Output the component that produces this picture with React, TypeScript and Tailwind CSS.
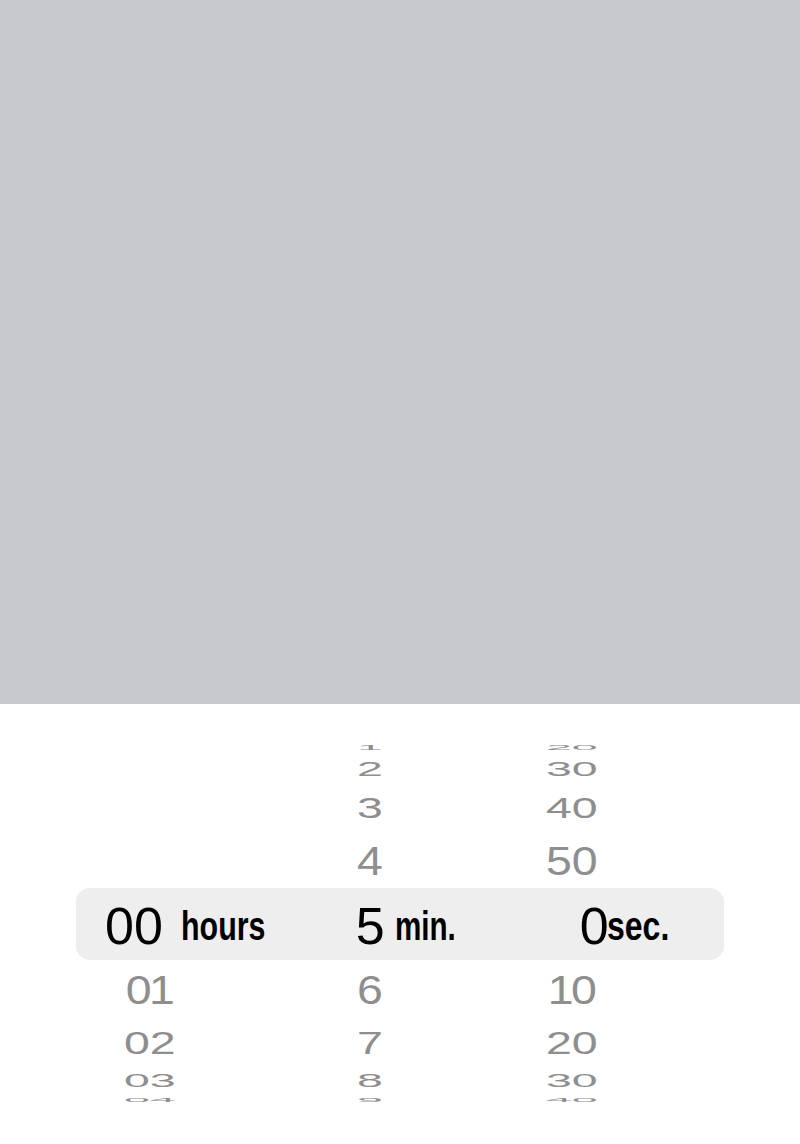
const font = "font-['Liberation_Sans',Arial,sans-serif]";

type WheelRow = { h: string; s: string; v: [string, string, string] };

const above: WheelRow[] = [
  { h: "h-[16px]", s: "scale-y-[0.14]", v: ["", "1", "20"] },
  { h: "h-[26px]", s: "scale-y-[0.39]", v: ["", "2", "30"] },
  { h: "h-[52px]", s: "scale-y-[0.6]", v: ["", "3", "40"] },
  { h: "h-[54px]", s: "scale-y-[0.83]", v: ["", "4", "50"] },
];

const below: WheelRow[] = [
  { h: "h-[60px]", s: "scale-y-[0.83]", v: ["01", "6", "10"] },
  { h: "h-[46px]", s: "scale-y-[0.62]", v: ["02", "7", "20"] },
  { h: "h-[30px]", s: "scale-y-[0.36]", v: ["03", "8", "30"] },
  { h: "h-[8px]", s: "scale-y-[0.11]", v: ["04", "9", "40"] },
];

// numbers with a "1" set a bit tighter, the wheel's font has a narrow one
const Row = ({ row }: { row: WheelRow }) => {
  const cell = (text: string, extra: string) => (
    <div className={`${extra} w-[100px] flex justify-center items-center`}>
      <span
        className={`block text-[50px] leading-none text-[#8e8e8e] whitespace-nowrap scale-x-[0.93] ${
          text.length > 1 && text.includes("1") ? "tracking-[-3px] pr-[3px]" : ""
        } ${row.s}`}
      >
        {text}
      </span>
    </div>
  );
  return (
    <div className={`${row.h} flex items-center`}>
      {cell(row.v[0], "ml-[100px]")}
      {cell(row.v[1], "ml-[120px]")}
      {cell(row.v[2], "ml-[102px]")}
    </div>
  );
};

const Label = ({ text, w, scale }: { text: string; w: string; scale: string }) => (
  <div className={`${w} mt-[18px]`}>
    <span
      className={`block origin-left whitespace-nowrap text-[40px] leading-none font-bold text-black ${scale}`}
    >
      {text}
    </span>
  </div>
);

const SelectedRow = () => {
  return (
    <div className="mx-[76px] h-[72px] rounded-[14px] bg-[#eeeeee] flex items-start pl-[29px]">
      <span className="mt-[12px] text-[52px] leading-none text-black">00</span>
      <div className="ml-[18px]">
        <Label text="hours" w="w-[82px]" scale="scale-x-[0.76]" />
      </div>
      <span className="ml-[93px] mt-[12px] text-[52px] leading-none text-black">5</span>
      <div className="ml-[10px]">
        <Label text="min." w="w-[60px]" scale="scale-x-[0.74]" />
      </div>
      <span className="ml-[125px] mt-[12px] text-[52px] leading-none text-black">0</span>
      <div className="-ml-[2px]">
        <Label text="sec." w="w-[64px]" scale="scale-x-[0.8]" />
      </div>
    </div>
  );
};

export default function App() {
  return (
    <div className={`${font} w-[800px] h-[1144px] bg-white overflow-hidden`}>
      <div className="h-[704px] bg-[#c7c8cd]" />
      <div className="pt-[36px]">
        {above.map((r, i) => (
          <Row key={`a${i}`} row={r} />
        ))}
        <SelectedRow />
        {below.map((r, i) => (
          <Row key={`b${i}`} row={r} />
        ))}
      </div>
    </div>
  );
}
